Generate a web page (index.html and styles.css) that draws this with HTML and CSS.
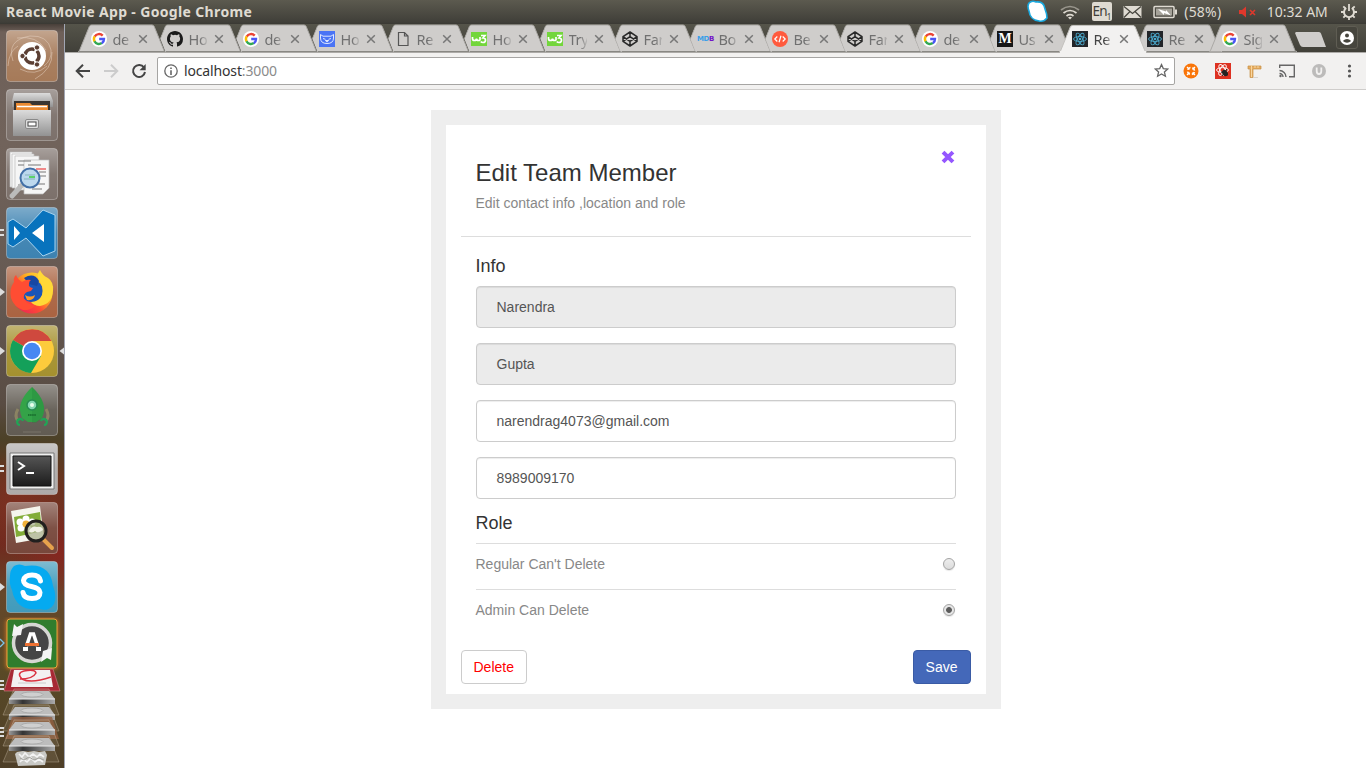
FILE: index.html
```html
<!DOCTYPE html>
<html lang="en">
<head>
<meta charset="utf-8">
<title>React Movie App</title>
<link rel="stylesheet" href="styles.css">
</head>
<body>
<svg class="defs" width="0" height="0" aria-hidden="true">
  <defs>
    <linearGradient id="gloss" x1="0" y1="0" x2="0" y2="1"><stop offset="0" stop-color="#fff" stop-opacity=".36"/><stop offset=".5" stop-color="#fff" stop-opacity=".1"/><stop offset="1" stop-color="#fff" stop-opacity=".05"/></linearGradient>
    <linearGradient id="metal" x1="0" y1="0" x2="0" y2="1"><stop offset="0" stop-color="#dcdcdc"/><stop offset="1" stop-color="#929292"/></linearGradient>
    <linearGradient id="dark" x1="0" y1="0" x2="0" y2="1"><stop offset="0" stop-color="#555"/><stop offset="1" stop-color="#1c1c1c"/></linearGradient>
    <linearGradient id="fox" x1="1" y1="0" x2="0" y2="1"><stop offset="0" stop-color="#fff04a"/><stop offset=".35" stop-color="#ffb31f"/><stop offset=".6" stop-color="#ff4b34"/><stop offset="1" stop-color="#e31763"/></linearGradient>
    <linearGradient id="drive" x1="0" y1="0" x2="1" y2="0"><stop offset="0" stop-color="#999"/><stop offset=".3" stop-color="#333"/><stop offset="1" stop-color="#aaa"/></linearGradient>
    <filter id="soft" x="-30%" y="-30%" width="160%" height="160%"><feGaussianBlur stdDeviation="2"/></filter>
  </defs>
  <symbol id="tab" viewBox="0 0 89 28"><path d="M0 27.500Q1 27.500 1.500 26.500L11.300 2.500Q12 1 13.500 1H74Q75.500 1 76.200 2.500L86 26.500Q86.500 27.500 88 27.500"/></symbol>
  <symbol id="x" viewBox="0 0 10 10"><path d="M1.200 1.200l7.600 7.600M8.800 1.200l-7.600 7.600" fill="none" stroke="#777" stroke-width="1.500"/></symbol>
  <symbol id="google" viewBox="0 0 16 16"><circle cx="8" cy="8" r="8" fill="#fff"/><g fill="none" stroke-width="2.400"><path d="M3.700 5.600A5 5 0 0 1 11.700 4.600" stroke="#ea4335"/><path d="M3.700 5.400a5 5 0 0 0 0 5.200" stroke="#fbbc05"/><path d="M3.500 10.200a5 5 0 0 0 7.300 1.900" stroke="#34a853"/><path d="M8.200 8H13a5 5 0 0 1-2.200 4.300" stroke="#4b55f5"/></g></symbol>
  <symbol id="github" viewBox="0 0 16 16"><path fill="#1b1b1b" d="M8 0C3.580 0 0 3.580 0 8c0 3.540 2.290 6.530 5.470 7.590.4.070.550-.170.550-.380 0-.190-.010-.820-.010-1.490-2.010.370-2.530-.490-2.690-.940-.090-.230-.480-.940-.820-1.130-.280-.150-.680-.520-.010-.530.630-.010 1.080.580 1.230.820.720 1.210 1.870.870 2.330.660.070-.520.280-.870.510-1.070-1.780-.200-3.640-.890-3.640-3.950 0-.870.310-1.590.820-2.150-.080-.200-.360-1.020.080-2.120 0 0 .670-.210 2.200.820a7.600 7.600 0 0 1 4 0c1.530-1.040 2.200-.820 2.200-.820.440 1.100.160 1.920.080 2.120.510.560.820 1.270.820 2.150 0 3.070-1.870 3.750-3.650 3.950.290.250.540.730.540 1.480 0 1.070-.010 1.930-.010 2.200 0 .210.150.460.550.380A8 8 0 0 0 16 8c0-4.420-3.580-8-8-8z"/></symbol>
  <symbol id="bear" viewBox="0 0 16 16"><path fill="#4a74f5" d="M0 0h16v16H0z"/><path d="M1.500 3.500l2.500 1.700h8l2.500-1.700v3.500q0 5.500-6.500 5.500T1.500 7zM4 7.500l2.500.8M12 7.500l-2.500.8M6.300 9.500h3.400L8 11z" fill="none" stroke="#dfe8ff"/></symbol>
  <symbol id="file" viewBox="0 0 16 16"><path d="M3.500 1.500h6l3.500 3.500v9.500H3.500zM9.500 1.500V5H13" fill="none" stroke="#555" stroke-width="1.200"/></symbol>
  <symbol id="w3" viewBox="0 0 16 16"><path fill="#73d63c" d="M0 1h16v14H0z"/><path d="M1.500 6v1.500q0 2 2 2t2-2q0 2 2 2T9 7.500V6M10 4.500h4L12 7q2.500 0 2.500 2.200T12 11.500q-1.500 0-2.200-1" fill="none" stroke="#fff" stroke-width="1.700"/></symbol>
  <symbol id="codepen" viewBox="0 0 16 16"><path d="M8 1l7 4.600v4.800L8 15l-7-4.600V5.600zM8 1v4.600M8 15v-4.600M1 5.600l7 4.800 7-4.800M1 10.400l7-4.800 7 4.800" fill="none" stroke="#292929" stroke-width="1.500" stroke-linejoin="round"/></symbol>
  <symbol id="code" viewBox="0 0 16 16"><circle cx="8" cy="8" r="8" fill="#ff5a3d"/><path d="M5.300 5.500L2.800 8l2.500 2.500M10.700 5.500L13.200 8l-2.500 2.500M9 4.800l-2 6.400" fill="none" stroke="#fff" stroke-width="1.200"/></symbol>
  <symbol id="react" viewBox="0 0 16 16"><path fill="#222529" d="M0 0h16v16H0z"/><g fill="none" stroke="#4ba9cc" stroke-width=".9"><ellipse cx="8" cy="8" rx="6.500" ry="2.500"/><ellipse cx="8" cy="8" rx="6.500" ry="2.500" transform="rotate(60 8 8)"/><ellipse cx="8" cy="8" rx="6.500" ry="2.500" transform="rotate(120 8 8)"/></g><circle cx="8" cy="8" r="1.300" fill="#4ba9cc"/></symbol>
  <symbol id="tile" viewBox="0 0 52 52"><rect x=".5" y=".5" width="51" height="51" rx="3.500"/><rect x=".5" y=".5" width="51" height="51" rx="3.500" fill="url(#gloss)" stroke="#fff" stroke-opacity=".3"/></symbol>
  <symbol id="hdd" viewBox="0 0 65 32"><path d="M14 2h35l10 26H3z" fill="#d8c9ab" fill-opacity=".12" stroke="#e8dcc8" stroke-opacity=".3"/><path d="M15 4h34l6 8H9z" fill="#bdbdbd"/><ellipse cx="32" cy="7.500" rx="11" ry="2.500" fill="#cfcfcf" stroke="#a0a0a0" stroke-width=".7"/><path d="M9 12h46v5H9z" fill="url(#drive)"/><path d="M9 12h46" stroke="#eee"/></symbol>
</svg>

<header class="panel">
  <span class="panel-title">React Movie App - Google Chrome</span>
  <div class="indicators">
    <svg width="22" height="24"><path d="M2 3Q5 0 9 2q8-1 9 7 2 5 2 9-3 4-8 3Q3 20 2 11 0 6 2 3z" fill="#fff" stroke="#1aa9df" stroke-width="1.600"/></svg>
    <svg width="20" height="24"><g fill="none" stroke="#dfdbd2" stroke-width="1.700"><path d="M1 10q9-7 18 0" opacity=".5"/><path d="M3.500 13q6.500-5 13 0M6.500 16q3.500-2.600 7 0"/></g><path d="M8 17.500q2-1.500 4 0l-2 2z" fill="#dfdbd2"/></svg>
    <span class="lang">En<sub>1</sub></span>
    <svg width="19" height="24"><path fill="#dfdbd2" d="M.5 6h18v12H.5z"/><path d="M1 6.500l8.500 7 8.500-7M1 17.500l6-6M18 17.500l-6-6" fill="none" stroke="#48473f" stroke-width="1.300"/></svg>
    <svg width="25" height="24"><rect x="1" y="6.500" width="20" height="11" rx="1" fill="none" stroke="#dfdbd2" stroke-width="1.500"/><path d="M22 9.500h2v5h-2z" fill="#dfdbd2"/><path d="M3 8.500h16v7H3z" fill="#a5a299"/><path d="M5 9l8 2.500V10l5 5.500-7-2.500v2z" fill="#fff"/></svg>
    <span class="battery">(58%)</span>
    <svg width="18" height="24"><path d="M0 10h3l4-3.500v11L3 14H0z" fill="#df382c"/><path d="M11 10l5 5M16 10l-5 5" stroke="#df382c" stroke-width="1.600"/></svg>
    <span class="clock">10:32 AM</span>
    <svg width="16" height="24"><path d="M5.200 8a5 5 0 1 0 5.600 0" fill="none" stroke="#dfdbd2" stroke-width="2"/><path d="M8 4v7M8 17v3M0 12h3M13 12h3M2.300 6.300l2.200 2.200M13.700 6.300l-2.200 2.200M2.300 17.700l2.200-2.200M13.700 17.700l-2.200-2.200" stroke="#dfdbd2" stroke-width="1.800"/></svg>
  </div>
</header>

<div class="desktop">
<nav class="launcher">
  <svg width="65" height="52"><use href="#tile" x="6" width="52" height="52" fill="#a17350"/><g fill="none" stroke="#e7d3c4" stroke-opacity=".5"><path d="M13 31Q6 10 30 6q18-1 21 14 1 10-7 16M8 36q1-15 10-20M20 39q15 8 27-3M35 49q18-10 17-27M17 8q20-3 29 12"/></g><circle cx="32" cy="26" r="14" fill="#fff"/><circle cx="32" cy="26" r="7" fill="none" stroke="#5b3f33" stroke-width="3.500" stroke-dasharray="12.500 2.200" stroke-dashoffset="-8.500"/><g fill="#5b3f33" stroke="#fff"><circle cx="22.500" cy="26" r="2.700"/><circle cx="37" cy="17.500" r="2.700"/><circle cx="37" cy="34.500" r="2.700"/></g></svg>
  <svg width="65" height="52"><use href="#tile" x="6" width="52" height="52" fill="#756963"/><path d="M14 4h36l3 8v6H12v-6z" fill="url(#metal)"/><path d="M14 12h36v10H14z" fill="#393532"/><path d="M16 14h14l2 2h16v6H16z" fill="#ec8b32"/><path d="M17 17.500h30" stroke="#fff" stroke-width="1.500"/><path d="M13 21h38v26H13z" fill="url(#metal)"/><rect x="25.500" y="30.500" width="13" height="9" rx="1.500" fill="#dedede" stroke="#888"/><rect x="28" y="33" width="8" height="4" fill="#fff" stroke="#444"/></svg>
  <svg width="65" height="52"><use href="#tile" x="6" width="52" height="52" fill="#756963"/><g fill="#f6f6f6" stroke="#bbb" stroke-width=".7"><path d="M10 4h22v35H10z"/><path d="M12 6h22v34H12z"/><path d="M15 8h24v34H15z"/><path d="M24 12h25v28l-6 6H24z"/></g><path d="M18 13h13M18 17h6M18 37h6M28 17h13M39 24h7M40 28h6M38 36h7M32 41h10" stroke="#777"/><path d="M36 21h10" stroke="#e66" stroke-width="1.500"/><path d="M22 37L12 48" stroke="#bbb" stroke-width="5" stroke-linecap="round"/><circle cx="30" cy="30" r="9.500" fill="#b7d5ed" fill-opacity=".9" stroke="#426fa7" stroke-width="2"/><path d="M25 27h10M24 31h11" stroke="#83b1ba"/><path d="M29 29h6" stroke="#5bd36a" stroke-width="2"/></svg>
  <svg width="65" height="52"><use href="#tile" x="6" width="52" height="52" fill="#337cad"/><path d="M0 23h4M0 28h4" stroke="#ddd" stroke-width="2"/><path d="M8 15l5-3 13 9L43 3l12 5v36l-12 5-17-18-13 9-5-3z" fill="#0873bd" stroke="#a8d4ef"/><path d="M14 19l6 7-6 7zM44 17v18L32 26z" fill="#fff"/></svg>
  <svg width="65" height="52"><use href="#tile" x="6" width="52" height="52" fill="#a65b37"/><path d="M0 22l5 4-5 4z" fill="#ddd"/><circle cx="32" cy="27" r="20.500" fill="url(#fox)"/><circle cx="32" cy="25" r="11" fill="#1a55b8"/><path d="M24 12q10-6 15 3l-2 5-8-2z" fill="#1747a3"/><path d="M40 4q-4 5-1 10 5 7 3 15-3 7-11 7 3 4 9 4 12-2 13-15 1-9-5-13-6-3-8-8z" fill="#ffd937"/><path d="M16 9q-3 3-2 7-5 7-3 16 3 9 12 12 8 1 13-5-9 0-12-6-1-5 3-7l4-1 2-3q-5-1-4-4 0-3 2-4-5-1-9 2-4-2-6-7z" fill="#ff4d33"/><path d="M25 29q5 3 10 0-1 6-8 5z" fill="#ff9b24"/></svg>
  <svg width="65" height="52"><use href="#tile" x="6" width="52" height="52" fill="#a08b24"/><path d="M0 22l5 4-5 4zM64.500 22l-5 4 5 4z" fill="#ddd"/><circle cx="32" cy="26" r="22" fill="#fdcb3c"/><path d="M32 26L13 15a22 22 0 0 1 38.500 1H32z" fill="#cf493e"/><path d="M32 26L13 15a22 22 0 0 0 18 33l10-17z" fill="#14a05a"/><circle cx="32" cy="26" r="10" fill="#fff"/><circle cx="32" cy="26" r="8.300" fill="#4688f2"/></svg>
  <svg width="65" height="52"><use href="#tile" x="6" width="52" height="52" fill="#59534a"/><path d="M18 25q-4 7 0 12M46 25q4 7 0 12" fill="none" stroke="#8b8363" stroke-width="3"/><path d="M32 3Q15 19 22 34l6 4h8l6-4Q49 19 32 3z" fill="#34a348"/><path d="M32 3v36h4l6-5Q49 19 32 3z" fill="#228538" opacity=".3"/><circle cx="32" cy="21" r="5" fill="#86d7b1" stroke="#258b50" stroke-width="1.500"/><circle cx="32" cy="21" r="2" fill="#eaffed"/><path d="M28 31h8" stroke="#14662a" stroke-width="1.500" stroke-dasharray="1.500 .6"/><path d="M20 41a3 3 0 1 1 3-4M44 41a3 3 0 1 0-3-4" fill="none" stroke="#20a556" stroke-width="2.200"/><path d="M23 48h18" stroke="#8b8379" stroke-opacity=".6"/></svg>
  <svg width="65" height="52"><use href="#tile" x="6" width="52" height="52" fill="#aaa7a6"/><path d="M0 23h4M0 28h4" stroke="#ddd" stroke-width="2"/><path d="M10 10h44v36H10z" fill="#f0f0ef" stroke="#777"/><path d="M13 13h38v30H13z" fill="url(#dark)" stroke="#111"/><path d="M18 19l6 4-6 4" fill="none" stroke="#fff" stroke-width="2"/><path d="M26 30h8" stroke="#fff" stroke-width="2"/></svg>
  <svg width="65" height="52"><use href="#tile" x="6" width="52" height="52" fill="#703e31"/><path d="M11 9l29-5 4 32-28 5z" fill="#f5f5ed"/><path d="M14 15l26-5 2 19-26 6z" fill="#82ad38"/><g fill="#fff"><circle cx="20" cy="20" r="3.500"/><circle cx="26" cy="17" r="3.500"/><circle cx="32" cy="20" r="3.500"/><circle cx="21" cy="26" r="3.500"/><circle cx="28" cy="27" r="3.500"/></g><circle cx="26" cy="22" r="3.500" fill="#f1b13b"/><path d="M43 37l9 9" stroke="#e7a24c" stroke-width="4" stroke-linecap="round"/><circle cx="36" cy="29" r="10" fill="#a9b08e" fill-opacity=".75" stroke="#211f1e" stroke-width="3"/><path d="M29 29q3-6 8-4 5-1 6 3-5 4-8 1-4 3-6 0z" fill="#f1f1e6"/></svg>
  <svg width="65" height="52"><use href="#tile" x="6" width="52" height="52" fill="#3796b8"/><path d="M0 22l5 4-5 4z" fill="#ddd"/><path d="M14 5q5-3 11 0 25-4 28 20 4 10 1 18-5 8-14 5-24 3-28-19-3-6-2-14 0-6 4-10z" fill="#05aaf0"/><path d="M40.500 20q-1-6-8.500-6t-8.500 5.500q0 4.500 8 6t8.500 6q0 6-8 6t-9-6" fill="none" stroke="#fff" stroke-width="5" stroke-linecap="round"/></svg>
  <svg class="launcher-stack" width="65" height="151">
    <rect x="6" y="2" width="52" height="50" rx="4" fill="#ff8b22" fill-opacity=".7" filter="url(#soft)"/><rect x="7" y="2" width="50" height="49" rx="3" fill="#307d2d" stroke="#e9a33c"/><path d="M0 22l4 4-4 4" fill="none" stroke="#7dc4ea" stroke-width="1.300"/>
    <circle cx="32" cy="26" r="18.500" fill="#454545" stroke="#d6d6d3" stroke-width="3.500"/><path d="M12 19l2-12 3 3 6-3-2 11zM52 31l-1 12-4-2-6 4 2-11z" fill="#f4f4f4"/><path d="M26.500 29l4-12h3l4 12" fill="none" stroke="#fff" stroke-width="3.500"/><path d="M23 32h5M36 32h5" stroke="#fff" stroke-width="4"/><path d="M25 27.500h14" stroke="#ee7233" stroke-width="3"/>
    <path d="M11 52h42l7 22H4z" fill="#a72934" stroke="#cc858a" stroke-opacity=".6"/><path d="M14 53h36l3 17H11z" fill="#f3f1f1"/><path d="M51 60q-20 7-29 2-6-6 2-8 11-2 12 2-3 6-16 6" fill="none" stroke="#da3340" stroke-width="1.500"/><path d="M18 66h28" stroke="#ccc"/>
    <path d="M0 64h4M0 68h4M0 72h4M0 111h4M0 115h4M0 119h4" stroke="#ddd" stroke-width="2"/>
    <use href="#hdd" y="70" width="65" height="32"/><use href="#hdd" y="86" width="65" height="32"/><path d="M12 100h40l7 22H5z" fill="#945f40" fill-opacity=".75"/><use href="#hdd" y="101" width="65" height="32"/><use href="#hdd" y="117" width="65" height="32"/>
    <path d="M17 135l6-1 5 1 6-1 5 1 6-1 2 4-2 10-27 1-3-12z" fill="#c9c9c5"/><path d="M19 137l3 3 3-4 4 4 4-3 4 3 3-3 4 3M20 145l3-3 4 3 4-4 4 4 4-3 4 3" fill="none" stroke="#f3f3f3" stroke-width="1.600"/><path d="M20 141l4 2 5-3 5 3 5-2 5 2" fill="none" stroke="#a0a09c"/>
  </svg>
</nav>

<section class="browser">
  <div class="tabstrip">
    <div class="tab wide"><svg class="shape"><use href="#tab"/></svg><svg class="fav"><use href="#google"/></svg><span class="name">de</span><svg class="close"><use href="#x"/></svg></div>
    <div class="tab wide"><svg class="shape"><use href="#tab"/></svg><svg class="fav"><use href="#github"/></svg><span class="name">Ho</span><svg class="close"><use href="#x"/></svg></div>
    <div class="tab wide"><svg class="shape"><use href="#tab"/></svg><svg class="fav"><use href="#google"/></svg><span class="name">de</span><svg class="close"><use href="#x"/></svg></div>
    <div class="tab wide"><svg class="shape"><use href="#tab"/></svg><svg class="fav"><use href="#bear"/></svg><span class="name">Ho</span><svg class="close"><use href="#x"/></svg></div>
    <div class="tab wide"><svg class="shape"><use href="#tab"/></svg><svg class="fav"><use href="#file"/></svg><span class="name">Re</span><svg class="close"><use href="#x"/></svg></div>
    <div class="tab wide"><svg class="shape"><use href="#tab"/></svg><svg class="fav"><use href="#w3"/></svg><span class="name">Ho</span><svg class="close"><use href="#x"/></svg></div>
    <div class="tab"><svg class="shape"><use href="#tab"/></svg><svg class="fav"><use href="#w3"/></svg><span class="name">Try</span><svg class="close"><use href="#x"/></svg></div>
    <div class="tab"><svg class="shape"><use href="#tab"/></svg><svg class="fav"><use href="#codepen"/></svg><span class="name">Far</span><svg class="close"><use href="#x"/></svg></div>
    <div class="tab"><svg class="shape"><use href="#tab"/></svg><span class="fav mdb">MD<b>B</b></span><span class="name">Bo</span><svg class="close"><use href="#x"/></svg></div>
    <div class="tab"><svg class="shape"><use href="#tab"/></svg><svg class="fav"><use href="#code"/></svg><span class="name">Be</span><svg class="close"><use href="#x"/></svg></div>
    <div class="tab"><svg class="shape"><use href="#tab"/></svg><svg class="fav"><use href="#codepen"/></svg><span class="name">Far</span><svg class="close"><use href="#x"/></svg></div>
    <div class="tab"><svg class="shape"><use href="#tab"/></svg><svg class="fav"><use href="#google"/></svg><span class="name">de</span><svg class="close"><use href="#x"/></svg></div>
    <div class="tab"><svg class="shape"><use href="#tab"/></svg><span class="fav medium">M</span><span class="name">Us</span><svg class="close"><use href="#x"/></svg></div>
    <div class="tab active"><svg class="shape"><use href="#tab"/></svg><svg class="fav"><use href="#react"/></svg><span class="name">Re</span><svg class="close"><use href="#x"/></svg></div>
    <div class="tab after-active"><svg class="shape"><use href="#tab"/></svg><svg class="fav"><use href="#react"/></svg><span class="name">Re</span><svg class="close"><use href="#x"/></svg></div>
    <div class="tab"><svg class="shape"><use href="#tab"/></svg><svg class="fav"><use href="#google"/></svg><span class="name">Sig</span><svg class="close"><use href="#x"/></svg></div>
    <svg class="newtab" width="33" height="28"><path d="M2 8h23q1.500 0 2 1.500L32 23H9q-2 0-3-2L1 9z" fill="#cfcdcb"/></svg>
    <svg class="avatar" width="23" height="28"><rect x=".5" y="2.500" width="21" height="22" rx="2.500" fill="#46453d" stroke="#5f5d53"/><circle cx="11" cy="14" r="7" fill="#fff"/><circle cx="11" cy="11.500" r="2" fill="#46453d"/><path d="M6.800 17q4.200-4 8.400 0-4.200 3.500-8.400 0z" fill="#46453d"/></svg>
  </div>

  <div class="toolbar">
    <svg class="nav-icon" viewBox="0 0 16 16"><path d="M15 8H2M8 1.700L1.700 8 8 14.300" fill="none" stroke="#444" stroke-width="2"/></svg>
    <svg class="nav-icon" viewBox="0 0 16 16"><path d="M1 8h13M8 1.700L14.300 8 8 14.300" fill="none" stroke="#ccc" stroke-width="2"/></svg>
    <svg class="nav-icon" viewBox="0 0 16 16"><path d="M13 4.500A6 6 0 1 0 14 9" fill="none" stroke="#444" stroke-width="2"/><path d="M14.700 1v6.200H8.500z" fill="#444"/></svg>
    <div class="omnibox">
      <svg width="14" height="14"><circle cx="7" cy="7" r="6.200" fill="none" stroke="#666" stroke-width="1.300"/><path d="M7 6.300V11M7 3.500V5" stroke="#666" stroke-width="1.600"/></svg>
      <span class="url">localhost<span class="port">:3000</span></span>
      <svg class="star" width="15" height="15"><path d="M7.500 1.600l1.800 4 4.400.4-3.300 2.900 1 4.300-3.900-2.300-3.900 2.300 1-4.300L1.300 6l4.400-.4z" fill="none" stroke="#666" stroke-width="1.300"/></svg>
    </div>
    <div class="extensions">
      <svg viewBox="0 0 16 16"><circle cx="8" cy="8" r="7.500" fill="#f97509"/><circle cx="8" cy="8" r="3.500" fill="none" stroke="#fff" stroke-width="1.600" stroke-dasharray="3.500 2" stroke-dashoffset="-1"/><path d="M4 4l2.500 2.500M12 4L9.500 6.500M4 12l2.500-2.500M12 12L9.500 9.500" stroke="#fff" stroke-width="1.300"/></svg>
      <svg viewBox="0 0 16 16"><path fill="#dd3121" d="M0 0h16v16H0z"/><g fill="none" stroke="#fff" stroke-width=".9"><ellipse cx="7.500" cy="7" rx="6" ry="2.400"/><ellipse cx="7.500" cy="7" rx="6" ry="2.400" transform="rotate(60 7.500 7)"/><ellipse cx="7.500" cy="7" rx="6" ry="2.400" transform="rotate(120 7.500 7)"/></g><ellipse cx="10" cy="10" rx="2.500" ry="3.500" fill="#222" transform="rotate(-35 10 10)"/><path d="M6 9l7 3M7 13l5-7" stroke="#222"/></svg>
      <svg viewBox="0 0 16 16"><path d="M1 3h13v3H6v8.500H3V6H1z" fill="#e5ad61" stroke="#c78f46" stroke-width=".7"/><path d="M4.500 2v12M8 3v2M11 3v2" stroke="#f9d6a0"/><path d="M6 14.500h5" stroke="#d5d3d0"/></svg>
      <svg viewBox="0 0 16 16"><path d="M.7 5V2.200h14.600v11.600H10M.5 7.500a6.500 6.500 0 0 1 6.500 6.500M.5 10.500A3.500 3.500 0 0 1 4 14" fill="none" stroke="#666" stroke-width="1.400"/><circle cx="1.500" cy="13" r="1.200" fill="#666"/></svg>
      <svg viewBox="0 0 16 16"><circle cx="8" cy="8" r="7" fill="#bcbbba"/><path d="M5.700 4.500V8q0 3 2.300 3t2.300-3V4.500" fill="none" stroke="#f2f1f0" stroke-width="1.800"/></svg>
      <svg viewBox="0 0 16 16"><g fill="#555"><circle cx="6.500" cy="3" r="1.600"/><circle cx="6.500" cy="8" r="1.600"/><circle cx="6.500" cy="13" r="1.600"/></g></svg>
    </div>
  </div>

  <main class="page">
    <form class="card">
      <div class="card-head">
        <div><h3>Edit Team Member</h3><p>Edit contact info ,location and role</p></div>
        <svg class="dismiss" width="14" height="14"><path d="M3.400 3.400l7.200 7.200M10.600 3.400l-7.200 7.200" stroke="#9557ff" stroke-width="3.900" stroke-linecap="square"/></svg>
      </div>
      <div class="card-body">
        <h4>Info</h4>
        <div class="field disabled">Narendra</div>
        <div class="field disabled">Gupta</div>
        <div class="field">narendrag4073@gmail.com</div>
        <div class="field">8989009170</div>
        <h4 class="role-title">Role</h4>
        <div class="role"><span>Regular Can't Delete</span><i class="radio"></i></div>
        <div class="role"><span>Admin Can Delete</span><i class="radio checked"></i></div>
      </div>
      <div class="actions"><button type="button" class="btn delete">Delete</button><button type="button" class="btn save">Save</button></div>
    </form>
  </main>
</section>
</div>
</body>
</html>
```
FILE: styles.css
```css
* { box-sizing: border-box; }
body { margin: 0; width: 1366px; height: 768px; overflow: hidden; font-family: "Liberation Sans", Arial, sans-serif; background: #fff; }
svg { display: block; flex: none; }
.defs { position: absolute; }

.panel { height: 24px; display: flex; justify-content: space-between; padding: 0 8px 0 6px; background: linear-gradient(#5c5a4f, #403f39 92%, #3a3934); color: #dfdbd2; font: 14px/24px "Noto Sans", sans-serif; white-space: nowrap; }
.panel-title { font-weight: 700; font-size: 14px; letter-spacing: .35px; }
.indicators { display: grid; grid-template-columns: 22px 20px 20px 19px 25px 38px 18px 62px 17px; width: 331px; justify-content: space-between; }
.lang { height: 19px; margin-top: 2px; border-radius: 2px; background: #dfdbd2; color: #3f3e38; font-size: 13.5px; line-height: 19px; text-align: center; letter-spacing: -.8px; }
.lang sub { font-size: 8px; line-height: 0; }
.battery { margin-left: -5px; letter-spacing: .2px; }
.clock { margin-left: -1px; }

.desktop { display: flex; height: 744px; }
.launcher { width: 65px; flex: none; padding-top: 6px; display: flex; flex-direction: column; gap: 7px; overflow: hidden; border-right: 1px solid #a2a6b3;
  background: radial-gradient(60px 50px at 20px 480px, #842f22cc, #842f2200), radial-gradient(50px 50px at 60px 530px, #8a251fcc, #8a251f00), linear-gradient(#483f39 0, #6e6059 8px, #71635b 120px, #645851 280px, #594c43 380px, #4c4127 415px, #63361f 450px, #702a1e 520px, #66472a 570px, #5a4a26 640px, #4e3f28 744px); }
.launcher-stack { margin-top: -3px; }

.browser { flex: 1; display: flex; flex-direction: column; min-width: 0; }
.tabstrip { height: 29px; display: flex; padding-left: 12.5px; background: linear-gradient(#55544a, #414039); border-bottom: 1px solid #adaba8; }
.tab { position: relative; width: 75px; flex: none; display: flex; align-items: center; padding: 2px 0 0 13.500px; height: 28px; }
.wide { width: 76px; }
.shape { position: absolute; left: 0; top: 0; width: 89px; height: 28px; overflow: visible; fill: #cfcdcb; stroke: #aaa8a5; stroke-width: 1; }
.tab:not(.active, .after-active) + .tab:not(.active) .shape { clip-path: polygon(6.500px 14px, 12px 0, 89px 0, 89px 28px, 12px 28px); }
.fav { position: relative; width: 16px; height: 16px; flex: none; }
.name { position: relative; margin-left: 5.500px; width: 18px; flex: none; overflow: hidden; white-space: nowrap; font: 14.500px/20px "Noto Sans", sans-serif; letter-spacing: -.3px; color: #707070; -webkit-mask-image: linear-gradient(90deg, #000 60%, #0003); mask-image: linear-gradient(90deg, #000 60%, #0003); }
.close { position: relative; width: 10px; height: 10px; margin-left: 7.500px; }
.active { z-index: 2; }
.active .shape { fill: #f2f1f0; height: 29px; stroke: #c4c2bf; }
.active::after { content: ""; position: absolute; left: 1px; top: 27px; width: 86px; height: 2px; background: #f2f1f0; }
.active .name { color: #444; }
.mdb { font: bold 7px/16px "DejaVu Sans", sans-serif; color: #3b9fe8; letter-spacing: -.4px; }
.mdb b { color: #7414c8; }
.medium { background: #161616; color: #fff; font: bold 14px/16px "Liberation Serif", serif; text-align: center; }
.newtab { margin-left: 10.500px; }
.avatar { margin-left: 8.500px; }

.toolbar { height: 37px; display: flex; align-items: center; padding: 0 8px 1px 10px; background: #f2f1f0; border-bottom: 1px solid #cfcdcb; }
.nav-icon { width: 16px; height: 16px; margin-right: 12px; }
.omnibox { width: 1018px; flex: none; height: 28px; margin-left: -2px; display: flex; align-items: center; padding: 0 5px 0 6px; background: #fff; border: 1px solid #a6a5a3; border-radius: 2px; font: 14px/26px "Noto Sans", sans-serif; color: #333; }
.url { margin-left: 6px; flex: 1; letter-spacing: -.15px; }
.port { color: #8b8b8b; }
.extensions { margin-left: 8px; display: flex; gap: 16px; }
.extensions svg { width: 16px; height: 16px; }

.page { flex: 1; padding: 20px 0 0 365.500px; background: #fff; }
.card { width: 570px; height: 599px; border: 15px solid #eee; padding: 0 15px; font-size: 14px; line-height: 20px; color: #888; }
.card-head { height: 112px; padding: 35px 15px 0; display: flex; justify-content: space-between; border-bottom: 1px solid #ddd; }
h3, h4, p { margin: 0; font-weight: 400; }
h3 { font-size: 24px; line-height: 26px; color: #333; margin-bottom: 7px; }
h4 { font-size: 18px; line-height: 20px; color: #333; margin-bottom: 10px; }
.dismiss { margin: -10px .5px 0 0; }
.card-body { padding: 19px 15px 0; }
.field { height: 42px; margin-bottom: 15px; padding: 0 20px; border: 1px solid #ccc; border-radius: 4px; box-shadow: inset 0 1px 1px rgba(0,0,0,.075); line-height: 40px; color: #555; }
.disabled { background: #ebebeb; }
.role-title { margin-top: -1px; }
.role { height: 46px; display: flex; justify-content: space-between; border-top: 1px solid #ddd; padding-top: 10px; }
.radio { width: 12px; height: 12px; margin: 4px .5px 0 0; border: 1px solid #a3a3a3; border-radius: 50%; background: linear-gradient(#ededed, #dcdcdc); box-shadow: 0 1px 1px rgba(0,0,0,.1); }
.checked { background: radial-gradient(circle, #5c5c5c 0 2.500px, #e6e6e6 3.300px); }
.actions { display: flex; justify-content: space-between; margin-top: 15px; }
.btn { height: 34px; padding: 0 12px; border: 1px solid #ccc; border-radius: 4px; background: #fff; font: 14px/20px "Liberation Sans", Arial, sans-serif; }
.delete { color: #f00; }
.save { color: #fff; background: #4468b9; border-color: #3a5ba5; }
```
